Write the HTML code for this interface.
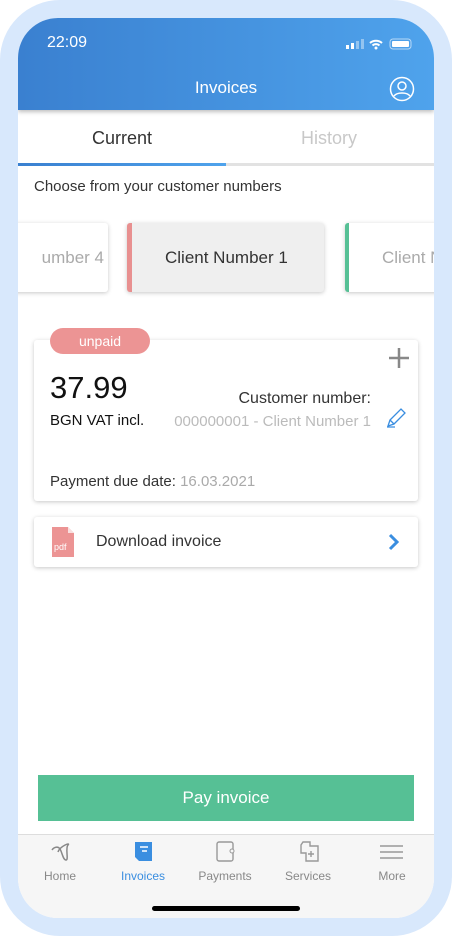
<!DOCTYPE html>
<html><head><meta charset="utf-8"><style>
*{margin:0;padding:0;box-sizing:border-box}
body{width:452px;height:936px;background:#fff;font-family:"Liberation Sans",sans-serif;overflow:hidden;position:relative}
.frame{position:absolute;left:0;top:0;width:452px;height:936px;background:#d8e8fc;border-radius:60px}
.screen{position:absolute;left:18px;top:18px;width:416px;height:900px;background:#fff;border-radius:40px;overflow:hidden}
.hdr{position:absolute;left:0;top:0;width:416px;height:92px;background:linear-gradient(90deg,#3a80d0,#4fa3ec);box-shadow:0 2px 4px rgba(0,0,0,.25)}
.abs{position:absolute}
.tab{position:absolute;top:110px;font-size:18px}
.card{position:absolute;background:#fff;border-radius:3px;box-shadow:0 1px 4px rgba(0,0,0,.22)}
.card .abs{line-height:1}
.nav{position:absolute;left:0;top:816px;width:416px;height:84px;background:#f6f6f6;border-top:1px solid #ddd}
.nl{position:absolute;top:34px;font-size:12px;color:#888;text-align:center;width:80px}
</style></head><body>
<div class="frame"></div>
<div class="screen">
 <div class="hdr">
  <div class="abs" style="left:29px;top:16px;color:#fff;font-size:16px">22:09</div>
  <svg class="abs" style="left:326px;top:20px" width="90" height="14">
   <rect x="2" y="7" width="3" height="4" fill="#fff"/><rect x="7" y="5" width="3" height="6" fill="#fff"/><rect x="12" y="3" width="3" height="8" fill="#fff" opacity=".4"/><rect x="17" y="1" width="3" height="10" fill="#fff" opacity=".4"/>
   <path d="M26 5a9 9 0 0 1 12 0M28.5 7.5a5 5 0 0 1 7 0" stroke="#fff" stroke-width="2" fill="none"/><circle cx="32" cy="10" r="1.5" fill="#fff"/>
   <rect x="46" y="1" width="21" height="10" rx="3" fill="none" stroke="#fff" opacity=".6"/><rect x="48" y="3" width="17" height="6" rx="1" fill="#fff"/>
  </svg>
  <div class="abs" style="left:0;width:416px;top:60px;text-align:center;color:#fff;font-size:17px">Invoices</div>
  <svg class="abs" style="left:371px;top:58px" width="26" height="26"><circle cx="13" cy="13" r="11.5" stroke="#fff" stroke-width="1.5" fill="none"/><circle cx="13" cy="10" r="4" stroke="#fff" stroke-width="1.5" fill="none"/><path d="M5 20c3-4 13-4 16 0" stroke="#fff" stroke-width="1.5" fill="none"/></svg>
 </div>
 <div class="tab" style="left:74px;color:#333">Current</div>
 <div class="tab" style="left:283px;color:#c8c8c8">History</div>
 <div class="abs" style="left:0;top:145px;width:416px;height:3px;background:#e2e2e2"></div>
 <div class="abs" style="left:0;top:145px;width:208px;height:3px;background:linear-gradient(90deg,#3a80d0,#4fa3ec)"></div>
 <div class="abs" style="left:16px;top:160px;font-size:15px;color:#333">Choose from your customer numbers</div>
 <div class="card" style="left:-10px;top:205px;width:100px;height:69px"><div class="abs" style="right:4px;top:26px;font-size:17px;color:#aaa">umber 4</div></div>
 <div class="card" style="left:109px;top:205px;width:197px;height:69px;background:#efefef;border-left:5px solid #e89090"><div class="abs" style="left:33px;top:26px;font-size:17px;color:#333">Client Number 1</div></div>
 <div class="card" style="left:327px;top:205px;width:110px;height:69px;border-left:4px solid #56c095"><div class="abs" style="left:33px;top:26px;font-size:17px;color:#aaa">Client N</div></div>
 <div class="card" style="left:16px;top:322px;width:384px;height:161px">
  <div class="abs" style="left:16px;top:32px;font-size:31px;color:#111">37.99</div>
  <div class="abs" style="left:16px;top:73px;font-size:15px;color:#111">BGN VAT incl.</div>
  <div class="abs" style="right:47px;top:51px;font-size:16px;color:#333">Customer number:</div>
  <div class="abs" style="right:47px;top:74px;font-size:15px;color:#bbb">000000001 - Client Number 1</div>
  <svg class="abs" style="left:351px;top:67px" width="22" height="22"><path d="M3 19l2-6L16 2l4 4L9 17z M5 13l4 4 M2 20h8" stroke="#3a8ee0" stroke-width="1.3" fill="none"/></svg>
  <svg class="abs" style="left:354px;top:7px" width="22" height="22"><path d="M11 1v20M1 11h20" stroke="#888" stroke-width="2.5"/></svg>
  <div class="abs" style="left:16px;top:134px;font-size:15px;color:#333">Payment due date: <span style="color:#aaa">16.03.2021</span></div>
 </div>
 <div class="abs" style="left:32px;top:310px;width:100px;height:26px;border-radius:13px;background:#ec9494;color:#fff;font-size:14px;text-align:center;line-height:26px">unpaid</div>
 <div class="card" style="left:16px;top:499px;width:384px;height:50px">
  <svg class="abs" style="left:18px;top:10px" width="22" height="30"><path d="M0 0h16l6 6v24H0z" fill="#ec9494"/><path d="M16 0v6h6" fill="#fff" opacity=".7"/><text x="2" y="23" font-size="9" fill="#fff" font-family="Liberation Sans">pdf</text></svg>
  <div class="abs" style="left:62px;top:17px;font-size:16px;color:#333">Download invoice</div>
  <svg class="abs" style="left:353px;top:16px" width="12" height="18"><path d="M3 2l7 7-7 7" stroke="#3a8ee0" stroke-width="3" fill="none"/></svg>
 </div>
 <div class="abs" style="left:20px;top:757px;width:376px;height:46px;background:#56c095;color:#fff;font-size:17px;text-align:center;line-height:46px">Pay invoice</div>
 <div class="nav">
  <svg class="abs" style="left:32px;top:6px" width="22" height="22"><path d="M2 9c2-3 6-4 8-1s3 11 6 11-1-12 2-15-8 1-10 7" stroke="#888" stroke-width="1.5" fill="none"/></svg>
  <svg class="abs" style="left:116px;top:6px" width="20" height="22"><path d="M1 1h17v19H5l-4-4z" fill="#3a8ee0"/><path d="M6 6h8M8 10h5" stroke="#fff" stroke-width="1.5"/></svg>
  <svg class="abs" style="left:198px;top:6px" width="20" height="22"><rect x="1" y="1" width="16" height="19" rx="2" stroke="#999" stroke-width="1.4" fill="none"/><circle cx="16" cy="10" r="2" stroke="#999" fill="#f6f6f6"/></svg>
  <svg class="abs" style="left:281px;top:4px" width="22" height="24"><path d="M4 3h7v4h8v15H7v-8H2V6z M12 12v6M9 15h6" stroke="#999" stroke-width="1.4" fill="none"/></svg>
  <svg class="abs" style="left:362px;top:10px" width="24" height="16"><path d="M0 1h23M0 7h23M0 13h23" stroke="#999" stroke-width="1.5"/></svg>
  <div class="nl" style="left:2px">Home</div>
  <div class="nl" style="left:85px;color:#3a8ee0">Invoices</div>
  <div class="nl" style="left:167px">Payments</div>
  <div class="nl" style="left:250px">Services</div>
  <div class="nl" style="left:334px">More</div>
  <div class="abs" style="left:134px;top:71px;width:148px;height:5px;border-radius:3px;background:#000"></div>
 </div>
</div>
</body></html>
